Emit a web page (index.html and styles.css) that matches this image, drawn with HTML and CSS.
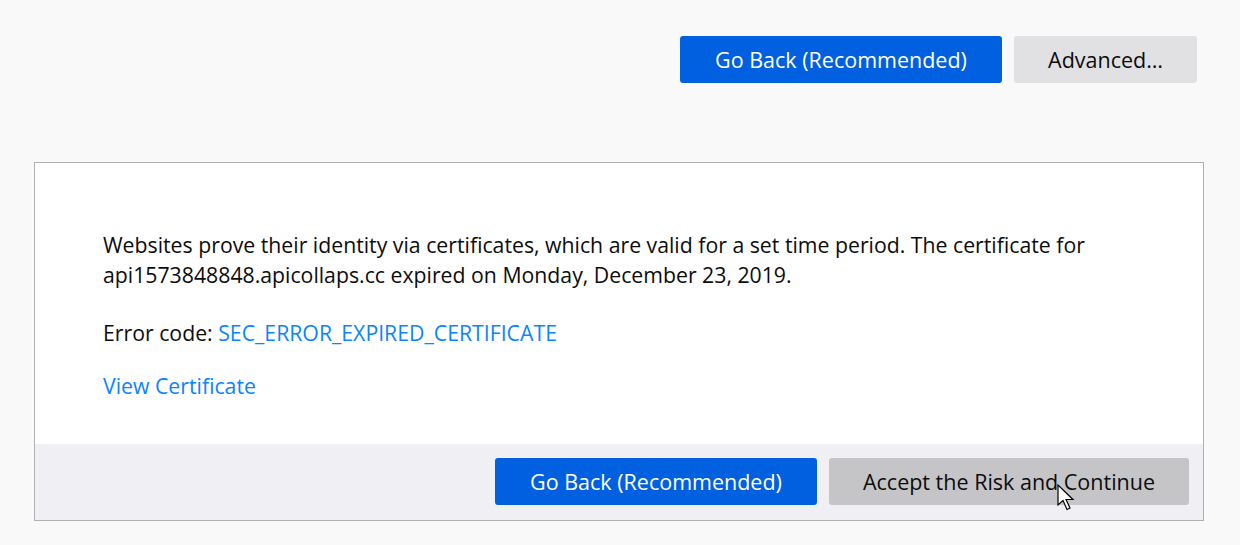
FILE: index.html
```html
<!DOCTYPE html>
<html>
<head>
<meta charset="utf-8">
<link rel="stylesheet" href="styles.css">
</head>
<body>
<div class="top">
  <button class="btn primary">Go Back (Recommended)</button>
  <button class="btn secondary">Advanced…</button>
</div>
<div class="panel">
  <div class="content">
    <p class="desc">Websites prove their identity via certificates, which are valid for a set time period. The certificate for api1573848848.apicollaps.cc expired on Monday, December 23, 2019.</p>
    <p class="code">Error code: <a class="link">SEC_ERROR_EXPIRED_CERTIFICATE</a></p>
    <p class="view"><a class="link">View Certificate</a></p>
  </div>
  <div class="footer">
    <button class="btn primary">Go Back (Recommended)</button>
    <button class="btn hover">Accept the Risk and Continue</button>
    <svg class="cursor" width="19" height="28" viewBox="0 0 19 28"><path d="M1 1 L1 21 L6 16.5 L10 25.5 L13 24 L9 15.5 L16 15.5 Z" fill="#fff" stroke="#000" stroke-width="1.2" stroke-linejoin="miter"/></svg>
  </div>
</div>
</body>
</html>
```
FILE: styles.css
```css
html, body {
  margin: 0;
  padding: 0;
  background: #f9f9fa;
  font-family: "Open Sans", "Noto Sans", sans-serif;
  color: #0c0c0d;
}
.top {
  display: flex;
  justify-content: flex-end;
  gap: 12px;
  padding: 36px 43px 0 0;
}
.btn {
  height: 47px;
  border: none;
  border-radius: 3px;
  font-family: inherit;
  font-size: 21.5px;
  padding: 0;
  color: #0c0c0d;
  cursor: default;
}
.primary {
  background: #0060df;
  color: #fff;
}
.secondary {
  background: #e1e1e3;
}
.hover {
  background: #c5c5c7;
}
.top .primary { width: 322px; }
.top .secondary { width: 183px; }
.panel {
  margin: 79px 0 0 34px;
  width: 1170px;
  box-sizing: border-box;
  border: 1px solid #b1b1b3;
  background: #fff;
}
.content {
  padding: 67px 60px 43px 68px;
  font-size: 21.25px;
  line-height: 30px;
}
.content p { margin: 0; }
.desc { margin-bottom: 28px !important; }
.code { margin-bottom: 23px !important; }
.link { color: #0a84ff; text-decoration: none; }
.footer {
  position: relative;
  background: #f0f0f4;
  display: flex;
  justify-content: flex-end;
  gap: 12px;
  padding: 14px 14px 15px 0;
}
.footer .primary { width: 322px; }
.footer .hover { width: 360px; }
.cursor {
  position: absolute;
  left: 1022px;
  top: 40px;
}
```
